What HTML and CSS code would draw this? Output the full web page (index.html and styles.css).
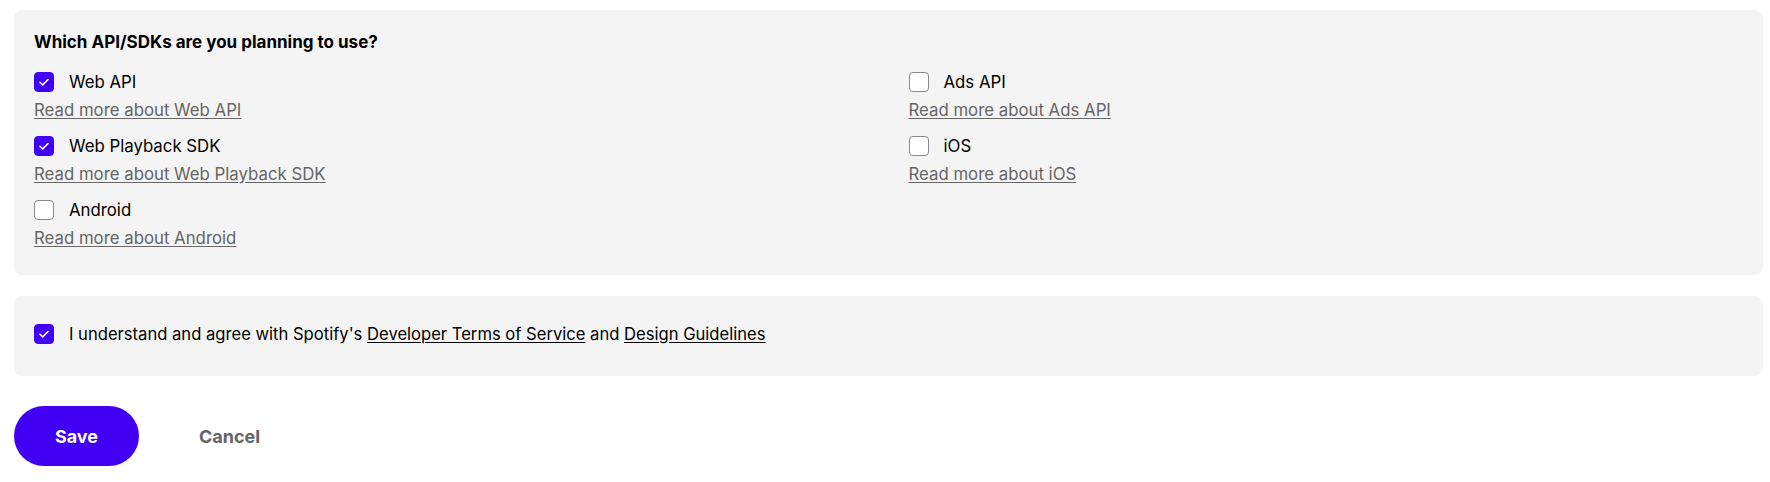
FILE: index.html
```html
<!DOCTYPE html>
<html lang="en">
<head>
<meta charset="utf-8">
<title>API/SDKs</title>
<link rel="stylesheet" href="styles.css">
</head>
<body>
<div class="page">
  <section class="card apis">
    <h3 class="heading">Which API/SDKs are you planning to use?</h3>
    <div class="grid">
      <div class="option">
        <label class="row"><span class="box checked"><svg viewBox="0 0 20 20"><polyline points="5.5,10.2 8.6,13.2 14.5,7.2"/></svg></span><span class="label">Web API</span></label>
        <a class="more" href="#">Read more about Web API</a>
      </div>
      <div class="option">
        <label class="row"><span class="box"></span><span class="label">Ads API</span></label>
        <a class="more" href="#">Read more about Ads API</a>
      </div>
      <div class="option">
        <label class="row"><span class="box checked"><svg viewBox="0 0 20 20"><polyline points="5.5,10.2 8.6,13.2 14.5,7.2"/></svg></span><span class="label">Web Playback SDK</span></label>
        <a class="more" href="#">Read more about Web Playback SDK</a>
      </div>
      <div class="option">
        <label class="row"><span class="box"></span><span class="label">iOS</span></label>
        <a class="more" href="#">Read more about iOS</a>
      </div>
      <div class="option">
        <label class="row"><span class="box"></span><span class="label">Android</span></label>
        <a class="more" href="#">Read more about Android</a>
      </div>
    </div>
  </section>
  <section class="card terms">
    <label class="row terms-row"><span class="box checked"><svg viewBox="0 0 20 20"><polyline points="5.5,10.2 8.6,13.2 14.5,7.2"/></svg></span><span class="label">I understand and agree with Spotify's <a class="link" href="#">Developer Terms of Service</a> and <a class="link" href="#">Design Guidelines</a></span></label>
  </section>
  <div class="actions">
    <button class="save" type="button">Save</button>
    <button class="cancel" type="button">Cancel</button>
  </div>
</div>
</body>
</html>
```

FILE: styles.css
```css
* { box-sizing: border-box; }
body {
  margin: 0;
  background: #ffffff;
  font-family: Inter, "Liberation Sans", Arial, sans-serif;
  color: #000000;
}
.page {
  padding: 10px 7px 0 14px;
}
.card {
  background: #f4f4f4;
  border-radius: 8px;
}
.apis {
  padding: 20px 20px 25px;
}
.heading {
  margin: 0 0 16px;
  font-size: 17px;
  line-height: 24px;
  font-weight: 700;
}
.grid {
  display: grid;
  grid-template-columns: 1fr 1fr;
  column-gap: 40px;
  row-gap: 12px;
}
.option {
  display: flex;
  flex-direction: column;
  align-items: flex-start;
}
.row {
  display: flex;
  align-items: center;
  gap: 15px;
  height: 24px;
  font-size: 16.8px;
  line-height: 24px;
}
.terms-row {
  font-size: 16.6px;
}
.box {
  width: 20px;
  height: 20px;
  flex: none;
  border: 1px solid #8a8a8a;
  border-radius: 4px;
  background: #ffffff;
  display: flex;
}
.box.checked {
  background: #4100f4;
  border-color: #4100f4;
}
.box svg {
  width: 18px;
  height: 18px;
}
.box polyline {
  fill: none;
  stroke: #ffffff;
  stroke-width: 1.7;
  stroke-linecap: round;
  stroke-linejoin: round;
}
.more {
  margin-top: 4px;
  font-size: 16.8px;
  line-height: 24px;
  color: #666666;
  text-decoration: underline;
  text-underline-offset: 2px;
}
.terms {
  margin-top: 21px;
  padding: 26px 20px 30px;
}
.link {
  color: #000000;
  text-decoration: underline;
  text-underline-offset: 2px;
}
.actions {
  margin-top: 30px;
  display: flex;
  align-items: center;
  gap: 60px;
}
.save {
  width: 125px;
  height: 60px;
  padding: 0;
  border: none;
  border-radius: 30px;
  background: #4100f4;
  color: #ffffff;
  font-family: inherit;
  font-size: 18px;
  font-weight: 700;
}
.cancel {
  border: none;
  background: none;
  padding: 0;
  color: #656565;
  font-family: inherit;
  font-size: 18px;
  font-weight: 700;
}
```
